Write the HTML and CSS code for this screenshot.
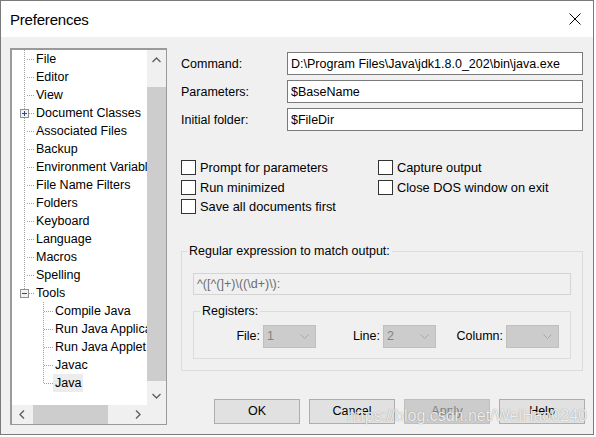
FILE: index.html
```html
<!DOCTYPE html>
<html>
<head>
<meta charset="utf-8">
<title>Preferences</title>
<link rel="stylesheet" href="styles.css">
</head>
<body>
<div class="win">
  <div class="titlebar">
    <span class="title">Preferences</span>
    <svg class="close" width="12" height="12" viewBox="0 0 12 12"><path d="M0.5 0.5L11.5 11.5M11.5 0.5L0.5 11.5" stroke="#000" stroke-width="1" fill="none"/></svg>
  </div>
  <div class="content">
    <div class="tree">
      <div class="tree-view">
        <div class="rows">
          <div class="node"><svg width="22" height="18"><path class="ln" d="M12.5 0V18M15 9.5H22"/></svg><span class="label">File</span></div>
          <div class="node"><svg width="22" height="18"><path class="ln" d="M12.5 0V18M15 9.5H22"/></svg><span class="label">Editor</span></div>
          <div class="node"><svg width="22" height="18"><path class="ln" d="M12.5 0V18M15 9.5H22"/></svg><span class="label">View</span></div>
          <div class="node"><svg width="22" height="18"><path class="ln" d="M12.5 0V18M17 9.5H22"/><rect x="8.5" y="5.5" width="8" height="8" fill="#f2f2f2" stroke="#919191"/><path d="M10 9.5H15M12.5 7V12" stroke="#2c4b8c" fill="none"/></svg><span class="label">Document Classes</span></div>
          <div class="node"><svg width="22" height="18"><path class="ln" d="M12.5 0V18M15 9.5H22"/></svg><span class="label">Associated Files</span></div>
          <div class="node"><svg width="22" height="18"><path class="ln" d="M12.5 0V18M15 9.5H22"/></svg><span class="label">Backup</span></div>
          <div class="node"><svg width="22" height="18"><path class="ln" d="M12.5 0V18M15 9.5H22"/></svg><span class="label">Environment Variables</span></div>
          <div class="node"><svg width="22" height="18"><path class="ln" d="M12.5 0V18M15 9.5H22"/></svg><span class="label">File Name Filters</span></div>
          <div class="node"><svg width="22" height="18"><path class="ln" d="M12.5 0V18M15 9.5H22"/></svg><span class="label">Folders</span></div>
          <div class="node"><svg width="22" height="18"><path class="ln" d="M12.5 0V18M15 9.5H22"/></svg><span class="label">Keyboard</span></div>
          <div class="node"><svg width="22" height="18"><path class="ln" d="M12.5 0V18M15 9.5H22"/></svg><span class="label">Language</span></div>
          <div class="node"><svg width="22" height="18"><path class="ln" d="M12.5 0V18M15 9.5H22"/></svg><span class="label">Macros</span></div>
          <div class="node"><svg width="22" height="18"><path class="ln" d="M12.5 0V18M15 9.5H22"/></svg><span class="label">Spelling</span></div>
          <div class="node"><svg width="22" height="18"><path class="ln" d="M12.5 0V5M17 9.5H22"/><rect x="8.5" y="5.5" width="8" height="8" fill="#f2f2f2" stroke="#919191"/><path d="M10 9.5H15" stroke="#2c4b8c" fill="none"/></svg><span class="label">Tools</span></div>
          <div class="node"><svg width="41" height="18"><path class="ln" d="M31.5 0V18M32 9.5H41"/></svg><span class="label">Compile Java</span></div>
          <div class="node"><svg width="41" height="18"><path class="ln" d="M31.5 0V18M32 9.5H41"/></svg><span class="label">Run Java Application</span></div>
          <div class="node"><svg width="41" height="18"><path class="ln" d="M31.5 0V18M32 9.5H41"/></svg><span class="label">Run Java Applet</span></div>
          <div class="node"><svg width="41" height="18"><path class="ln" d="M31.5 0V18M32 9.5H41"/></svg><span class="label">Javac</span></div>
          <div class="node"><svg width="41" height="18"><path class="ln" d="M31.5 0V10M32 9.5H41"/></svg><span class="label sel">Java</span></div>
        </div>
      </div>
      <div class="vscroll">
        <div class="sb-btn"><svg width="9" height="6"><path class="chev" d="M0.5 5L4.5 1L8.5 5"/></svg></div>
        <div class="vthumb"></div>
        <div class="sb-fill"></div>
        <div class="sb-btn"><svg width="9" height="6"><path class="chev" d="M0.5 1L4.5 5L8.5 1"/></svg></div>
      </div>
      <div class="hscroll">
        <div class="sb-btn"><svg width="6" height="9"><path class="chev" d="M5 0.5L1 4.5L5 8.5"/></svg></div>
        <div class="hthumb"></div>
        <div class="sb-fill"></div>
        <div class="sb-btn"><svg width="6" height="9"><path class="chev" d="M1 0.5L5 4.5L1 8.5"/></svg></div>
      </div>
      <div class="corner"></div>
    </div>

    <div class="panel">
      <div class="fields">
        <span class="flabel">Command:</span>
        <div class="text">D:\Program Files\Java\jdk1.8.0_202\bin\java.exe</div>
        <span class="flabel">Parameters:</span>
        <div class="text">$BaseName</div>
        <span class="flabel">Initial folder:</span>
        <div class="text">$FileDir</div>
      </div>

      <div class="checks">
        <label class="check"><span class="box"></span>Prompt for parameters</label>
        <label class="check"><span class="box"></span>Capture output</label>
        <label class="check"><span class="box"></span>Run minimized</label>
        <label class="check"><span class="box"></span>Close DOS window on exit</label>
        <label class="check"><span class="box"></span>Save all documents first</label>
      </div>

      <fieldset class="group">
        <legend class="glegend">Regular expression to match output:</legend>
        <div class="regex">^([^(]+)\((\d+)\):</div>
        <fieldset class="regs">
          <legend class="rlegend">Registers:</legend>
          <div class="regrow">
            <span class="rlabel">File:</span>
            <div class="combo"><span>1</span><svg width="9" height="5"><path class="cchev" d="M0.5 0.5L4.5 4.5L8.5 0.5"/></svg></div>
            <span class="rlabel">Line:</span>
            <div class="combo"><span>2</span><svg width="9" height="5"><path class="cchev" d="M0.5 0.5L4.5 4.5L8.5 0.5"/></svg></div>
            <span class="rlabel">Column:</span>
            <div class="combo"><span></span><svg width="9" height="5"><path class="cchev" d="M0.5 0.5L4.5 4.5L8.5 0.5"/></svg></div>
          </div>
        </fieldset>
      </fieldset>

      <div class="buttons">
        <div class="btn">OK</div>
        <div class="btn">Cancel</div>
        <div class="btn dis">Apply</div>
        <div class="btn">Help</div>
      </div>
    </div>
  </div>
  <div class="watermark">https://blog.csdn.net/WeiHao0240</div>
</div>
</body>
</html>
```

FILE: styles.css
```css
* { box-sizing: border-box; }

html, body {
  margin: 0;
  padding: 0;
  background: #ffffff;
}

body {
  font-family: "Liberation Sans", Arial, sans-serif;
  font-size: 12.5px;
  color: #000;
}

.win {
  position: relative;
  width: 594px;
  height: 435px;
  border: 1px solid #7a7a7a;
  background: #f0f0f0;
  display: flex;
  flex-direction: column;
}

.titlebar {
  flex: none;
  height: 36px;
  background: #fff;
  display: flex;
  align-items: center;
  justify-content: space-between;
  padding: 0 12px 0 9px;
}

.title {
  font-size: 15px;
  letter-spacing: -0.2px;
}

.close { display: block; }

.content {
  flex: 1;
  display: flex;
  gap: 14px;
  padding: 11px 0 0 9px;
}

/* ---------- tree ---------- */
.tree {
  flex: none;
  width: 157px;
  height: 377px;
  border-style: solid;
  border-width: 2px 1px 1px 2px;
  border-color: #9a9a9a;
  background: #fff;
  display: grid;
  grid-template-columns: 1fr 19px;
  grid-template-rows: 1fr 19px;
}

.tree-view {
  overflow: hidden;
  min-width: 0;
}

.rows { width: max-content; }

.node {
  display: flex;
  align-items: center;
  height: 18px;
}

.node svg {
  display: block;
  flex: none;
}

.ln {
  fill: none;
  stroke: #a0a0a0;
  stroke-width: 1;
  stroke-dasharray: 1 1;
  shape-rendering: crispEdges;
}

.node rect, .node path { shape-rendering: crispEdges; }

.label {
  padding: 1px 2px 0;
  height: 18px;
  line-height: 17px;
  white-space: nowrap;
}

.label.sel { background: #ececec; }

.vscroll {
  background: #f0f0f0;
  display: flex;
  flex-direction: column;
}

.hscroll {
  background: #f0f0f0;
  display: flex;
}

.corner { background: #f0f0f0; }

.sb-btn {
  flex: none;
  width: 19px;
  height: 19px;
  display: flex;
  align-items: center;
  justify-content: center;
}

.sb-btn svg { display: block; }

.chev {
  fill: none;
  stroke: #606060;
  stroke-width: 1.4;
}

.sb-fill { flex: 1; }

.vthumb {
  flex: none;
  height: 294px;
  margin-top: 18px;
  background: #cdcdcd;
}

.hthumb {
  flex: none;
  width: 75px;
  margin-left: 2px;
  background: #cdcdcd;
}

/* ---------- right panel ---------- */
.panel {
  width: 404px;
  padding-top: 4px;
  display: flex;
  flex-direction: column;
}

.fields {
  display: grid;
  grid-template-columns: 106px 296px;
  grid-auto-rows: 23px;
  row-gap: 5px;
  align-items: center;
}

.flabel { padding-top: 1px; }

.text {
  height: 23px;
  border: 1px solid #7a7a7a;
  background: #fff;
  padding: 1px 3px 0;
  line-height: 20px;
  white-space: nowrap;
  overflow: hidden;
}

.checks {
  margin-top: 27px;
  display: grid;
  grid-template-columns: 197px auto;
  grid-auto-rows: 19.5px;
  font-size: 12.8px;
}

.check {
  display: flex;
  align-items: center;
  gap: 4px;
  white-space: nowrap;
}

.box {
  flex: none;
  width: 15px;
  height: 15px;
  border: 1px solid #333;
  background: #fff;
}

.group {
  margin: 27px 0 0;
  width: 402px;
  min-width: 0;
  padding: 14px 11px 11px;
  border: 1px solid #dcdcdc;
}

.glegend {
  padding: 0 2px;
  margin-left: -6px;
  line-height: 15px;
}

.regex {
  height: 22px;
  border: 1px solid #d4d4d4;
  background: #f0f0f0;
  color: #6d6d6d;
  padding: 1px 3px 0;
  line-height: 19px;
  white-space: nowrap;
}

.regs {
  margin: 9px 0 0;
  min-width: 0;
  padding: 6px 0 10px;
  border: 1px solid #dcdcdc;
}

.rlegend {
  padding: 0 2px;
  margin-left: 6px;
  line-height: 15px;
}

.regrow {
  display: grid;
  grid-template-columns: 69px 53px 67px 53px 70px 53px;
  align-items: center;
  height: 23px;
}

.rlabel {
  text-align: right;
  padding-right: 3px;
}

.combo {
  height: 23px;
  background: #cccccc;
  border: 1px solid #bfbfbf;
  color: #838383;
  display: flex;
  align-items: center;
  justify-content: space-between;
  padding: 0 6px 0 3px;
}

.combo svg { display: block; }

.cchev {
  fill: none;
  stroke: #a8a8a8;
  stroke-width: 1;
}

.buttons {
  margin-top: 28px;
  display: flex;
  justify-content: flex-end;
  gap: 9px;
}

.btn {
  width: 86px;
  height: 25px;
  background: #e1e1e1;
  border: 1px solid #adadad;
  display: flex;
  align-items: center;
  justify-content: center;
}

.btn.dis {
  background: #cccccc;
  border-color: #bfbfbf;
  color: #838383;
}

/* watermark overlay */
.watermark {
  position: absolute;
  left: 346px;
  top: 406px;
  font-family: "Liberation Sans", Arial, sans-serif;
  font-size: 16px;
  line-height: 18px;
  color: rgba(255, 255, 255, 0.85);
  text-shadow: 0 0 1px rgba(90, 90, 90, 0.7);
  white-space: nowrap;
  pointer-events: none;
}
```
